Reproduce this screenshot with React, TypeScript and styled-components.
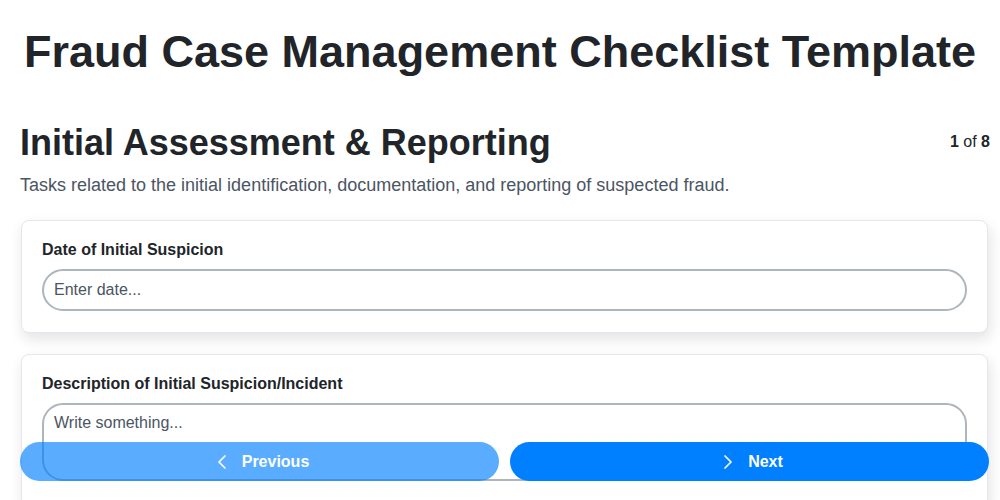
import styled, { createGlobalStyle } from "styled-components";
import { ChevronLeft, ChevronRight } from "lucide-react";

const GlobalStyle = createGlobalStyle`
    body {
        margin: 0;
        font-family: "Liberation Sans", Arial, sans-serif;
        color: #212529;
        background: #ffffff;
    }
    * {
        box-sizing: border-box;
    }
`;

const Page = styled.div`
    padding: 0 10px 80px 20px;
`;

// centred on the whole window, not the padded column
const Title = styled.h1`
    font-size: 45px;
    font-weight: 700;
    text-align: center;
    margin: 26px 0 44px -10px;
    color: #212529;
`;

const SectionHeader = styled.div`
    display: flex;
    justify-content: space-between;
    align-items: flex-start;
`;

const SectionTitle = styled.h2`
    font-size: 36px;
    font-weight: 700;
    margin: 0;
    line-height: 42px;
`;

const Counter = styled.div`
    font-size: 16px;
    color: #212529;
    margin-top: 11px;

    b {
        font-weight: 700;
    }
`;

const Subtitle = styled.p`
    font-size: 18px;
    color: #4b5563;
    margin: 11px 0 24px;
`;

const Card = styled.div`
    background: #ffffff;
    border: 1px solid #e5e7eb;
    border-radius: 8px;
    box-shadow: 2px 6px 14px rgba(15, 23, 42, 0.12);
    padding: 20px 20px 21px 20px;
    margin: 0 2px 21px 1px;
`;

const Label = styled.label`
    display: block;
    font-size: 16px;
    font-weight: 700;
    color: #212529;
    margin-bottom: 10px;
`;

const Field = styled.input`
    width: 100%;
    height: 42px;
    border: 2px solid #adb5bd;
    border-radius: 21px;
    padding: 0 10px;
    font-family: inherit;
    font-size: 16px;
    color: #212529;
    outline: none;

    &::placeholder {
        color: #4b5563;
    }
`;

const TextArea = styled.textarea`
    width: 100%;
    height: 78px;
    border: 2px solid #adb5bd;
    border-radius: 21px;
    padding: 9px 10px;
    font-family: inherit;
    font-size: 16px;
    color: #212529;
    resize: none;
    outline: none;

    &::placeholder {
        color: #4b5563;
    }
`;

const NavBar = styled.div`
    position: fixed;
    left: 20px;
    right: 11px;
    bottom: 19px;
    display: grid;
    grid-template-columns: 1fr 1fr;
    gap: 11px;
`;

const NavButton = styled.button<{ $faded?: boolean }>`
    height: 39px;
    border: none;
    border-radius: 20px;
    background: #0080ff;
    opacity: ${(props) => (props.$faded ? 0.65 : 1)};
    color: #ffffff;
    font-family: inherit;
    font-size: 16px;
    font-weight: 700;
    display: flex;
    align-items: center;
    justify-content: center;
    gap: 8px;
    cursor: pointer;
`;

function App() {
    return (
        <Page>
            <GlobalStyle />
            <Title>Fraud Case Management Checklist Template</Title>
            <SectionHeader>
                <SectionTitle>Initial Assessment &amp; Reporting</SectionTitle>
                <Counter>
                    <b>1</b> of <b>8</b>
                </Counter>
            </SectionHeader>
            <Subtitle>
                Tasks related to the initial identification, documentation, and reporting of suspected fraud.
            </Subtitle>
            <Card>
                <Label>Date of Initial Suspicion</Label>
                <Field placeholder="Enter date..." />
            </Card>
            <Card>
                <Label>Description of Initial Suspicion/Incident</Label>
                <TextArea placeholder="Write something..." />
            </Card>
            <NavBar>
                <NavButton $faded>
                    <ChevronLeft size={24} strokeWidth={1.75} />
                    Previous
                </NavButton>
                <NavButton>
                    <ChevronRight size={24} strokeWidth={1.75} />
                    Next
                </NavButton>
            </NavBar>
        </Page>
    );
}

export default App;
